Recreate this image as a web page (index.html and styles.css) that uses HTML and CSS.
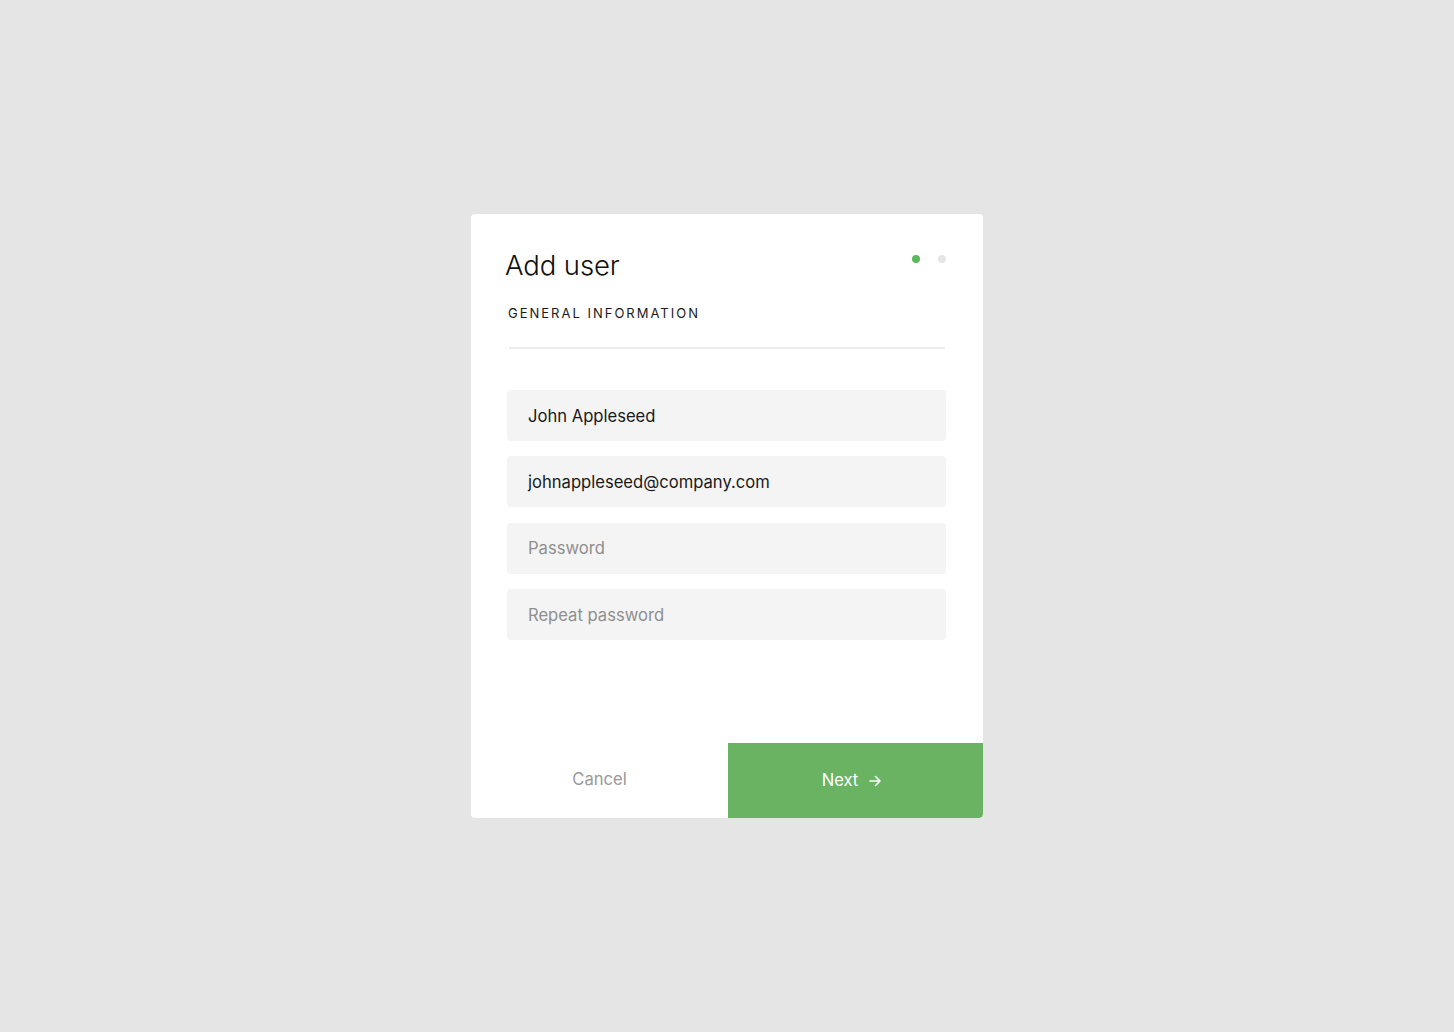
FILE: index.html
```html
<!DOCTYPE html>
<html>
<head>
<meta charset="utf-8">
<link rel="stylesheet" href="styles.css">
</head>
<body>
<div class="card">
  <div class="body">
    <div class="head">
      <h1 class="title">Add user</h1>
      <div class="steps"><span class="dot active"></span><span class="dot"></span></div>
    </div>
    <div class="section">GENERAL INFORMATION</div>
    <div class="divider"></div>
    <div class="fields">
      <div class="field">John Appleseed</div>
      <div class="field">johnappleseed@company.com</div>
      <div class="field placeholder">Password</div>
      <div class="field placeholder">Repeat password</div>
    </div>
  </div>
  <div class="actions">
    <div class="btn cancel">Cancel</div>
    <div class="btn next">Next
      <svg width="14" height="14" viewBox="0 0 14 14" fill="none" stroke="#fff" stroke-width="1.6" stroke-linecap="round" stroke-linejoin="round"><path d="M2 7h10M7.5 2.5L12 7l-4.5 4.5"/></svg>
    </div>
  </div>
</div>
</body>
</html>
```
FILE: styles.css
```css
html, body {
  margin: 0;
  padding: 0;
}
body {
  background: #e5e5e5;
  font-family: Inter, "Noto Sans", sans-serif;
  display: flex;
  justify-content: center;
  padding-top: 214px;
  height: 1032px;
  box-sizing: border-box;
}
.card {
  width: 512px;
  height: 604px;
  background: #fff;
  border-radius: 4px;
  overflow: hidden;
  display: flex;
  flex-direction: column;
}
.body {
  flex: 1;
  padding: 33px 37px 0 36px;
}
.head {
  display: flex;
  justify-content: space-between;
  align-items: flex-start;
}
.title {
  margin: 0 0 0 -2px;
  font-size: 27.5px;
  font-weight: 300;
  line-height: 36px;
  color: #111;
  letter-spacing: -0.1px;
}
.steps {
  display: flex;
  gap: 18px;
  margin-top: 8px;
}
.dot {
  width: 8px;
  height: 8px;
  border-radius: 50%;
  background: #e6e6e6;
}
.dot.active {
  background: #5cb85c;
}
.section {
  margin-top: 22px;
  margin-left: 1px;
  font-size: 13px;
  font-weight: 400;
  letter-spacing: 2px;
  color: #1a1a1a;
  line-height: 16px;
}
.divider {
  height: 2px;
  background: #ebebeb;
  margin: 26px 1px 0 2px;
}
.fields {
  margin-top: 41px;
  display: flex;
  flex-direction: column;
  gap: 15.4px;
}
.field {
  height: 51px;
  background: #f4f4f4;
  border-radius: 4px;
  display: flex;
  align-items: center;
  padding-left: 21px;
  font-size: 16.6px;
  color: #1a1a1a;
}
.field.placeholder {
  color: #8f8f8f;
}
.actions {
  display: flex;
  height: 75px;
}
.btn {
  display: flex;
  align-items: center;
  justify-content: center;
  font-size: 16.6px;
}
.cancel {
  width: 257px;
  color: #999;
  padding-bottom: 3px;
  box-sizing: border-box;
}
.next {
  flex: 1;
  background: #69b362;
  color: #fff;
  gap: 10px;
  padding-right: 7px;
  padding-bottom: 1px;
  border-bottom-right-radius: 4px;
}
.next svg {
  margin-top: 1px;
}
```
